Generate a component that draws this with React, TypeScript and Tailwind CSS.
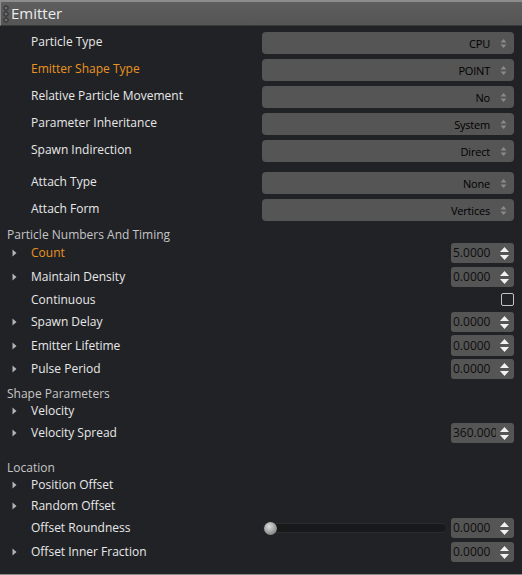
import React from "react";

const Tri = () => (
  <svg width="5" height="8" viewBox="0 0 5 8" className="block">
    <path d="M0.5 0.5 L4.5 4 L0.5 7.5 Z" fill="#b4b4b4" />
  </svg>
);

const ComboArrows = () => (
  <svg width="7" height="11" viewBox="0 0 7 11" className="ml-[10px] block">
    <path d="M0.5 4.5 L3.5 1 L6.5 4.5 Z" fill="#8a8a8a" />
    <path d="M0.5 6.5 L3.5 10 L6.5 6.5 Z" fill="#8a8a8a" />
  </svg>
);

const SpinArrows = () => (
  <svg width="11" height="17" viewBox="0 0 11 17" className="block">
    <path d="M1 7 L5.5 2 L10 7 Z" fill="#f2f2f2" />
    <path d="M1 10 L5.5 15 L10 10 Z" fill="#f2f2f2" />
  </svg>
);

function Combo({ value }: { value: string }) {
  return (
    <div className="flex h-[22px] w-[252px] items-center justify-end rounded-[4px] bg-[#555555] pr-[7px]">
      <span className="text-[11px] leading-none tracking-[-0.2px] text-black">{value}</span>
      <ComboArrows />
    </div>
  );
}

function Spin({ value, h = "h-[20px]" }: { value: string; h?: string }) {
  return (
    <div className={`flex ${h} w-[63px] items-center rounded-[3px] bg-[#555555]`}>
      <span className="w-[45px] overflow-hidden whitespace-nowrap pl-[2px] text-[12px] leading-[16px] text-[#0e0e0e]">
        {value}
      </span>
      <div className="ml-[3px]">
        <SpinArrows />
      </div>
    </div>
  );
}

function Row({
  label,
  orange,
  expand,
  control,
  cls,
  lift,
}: {
  label: string;
  orange?: boolean;
  expand?: boolean;
  control?: React.ReactNode;
  cls: string;
  lift?: boolean;
}) {
  return (
    <div className={`flex items-center ${cls}`}>
      <div className="flex w-[31px] shrink-0 items-center pl-[12px]">{expand ? <Tri /> : null}</div>
      <span
        className={`text-[12px] leading-none whitespace-nowrap ${lift ? "pb-[2px]" : ""} ${
          orange ? "text-[#ea9320]" : "text-[#e8e8e8]"
        }`}
      >
        {label}
      </span>
      <div className="ml-auto flex items-center pr-[8px]">{control}</div>
    </div>
  );
}

function Section({ label, cls }: { label: string; cls: string }) {
  return (
    <div className={`flex ${cls}`}>
      <span className="flex h-[14px] items-center pl-[7px] text-[12px] leading-none text-[#c6c6c6]">
        {label}
      </span>
    </div>
  );
}

export default function App() {
  return (
    <div className="h-[575px] w-[522px] overflow-hidden border-b border-[#8a8a8a] bg-[#212226] font-['Open_Sans',sans-serif]">
      <div className="flex h-[26px] items-center border-t-2 border-l border-[#8c8c8c] bg-gradient-to-b from-[#5e5e5e] to-[#555555] border-b border-b-[#3a3a3a]">
        <svg width="8" height="20" viewBox="0 0 8 20" className="ml-[1px] block">
          <circle cx="4" cy="4" r="2.2" fill="#6a6a6a" stroke="#2a2a2a" strokeWidth="1" />
          <circle cx="4" cy="10" r="2.2" fill="#6a6a6a" stroke="#2a2a2a" strokeWidth="1" />
          <circle cx="4" cy="16" r="2.2" fill="#6a6a6a" stroke="#2a2a2a" strokeWidth="1" />
        </svg>
        <span className="ml-[1px] text-[15px] leading-none text-[#ececec]">Emitter</span>
      </div>

      <div className="pt-[6px]">
        <Row cls="h-[22px] mb-[5px]" lift label="Particle Type" control={<Combo value="CPU" />} />
        <Row cls="h-[22px] mb-[5px]" lift label="Emitter Shape Type" orange control={<Combo value="POINT" />} />
        <Row cls="h-[22px] mb-[5px]" lift label="Relative Particle Movement" control={<Combo value="No" />} />
        <Row cls="h-[22px] mb-[5px]" lift label="Parameter Inheritance" control={<Combo value="System" />} />
        <Row cls="h-[22px] mb-[10px]" lift label="Spawn Indirection" control={<Combo value="Direct" />} />
        <Row cls="h-[22px] mb-[5px]" lift label="Attach Type" control={<Combo value="None" />} />
        <Row cls="h-[22px]" lift label="Attach Form" control={<Combo value="Vertices" />} />

        <Section cls="h-[22px] pt-[7px]" label="Particle Numbers And Timing" />
        <Row cls="h-[20px]" label="Count" orange expand control={<Spin value="5.0000" />} />
        <Row cls="h-[20px] mt-[4px]" label="Maintain Density" expand control={<Spin value="0.0000" />} />
        <Row
          cls="h-[25px]"
          label="Continuous"
          control={<div className="h-[13px] w-[13px] rounded-[2px] border border-[#c4c4c4]" />}
        />
        <Row cls="h-[20px]" label="Spawn Delay" expand control={<Spin value="0.0000" />} />
        <Row cls="h-[21px] mt-[3px]" label="Emitter Lifetime" expand control={<Spin value="0.0000" h="h-[21px]" />} />
        <Row cls="h-[20px] mt-[3px]" label="Pulse Period" expand control={<Spin value="0.0000" />} />

        <Section cls="h-[22px] pt-[8px]" label="Shape Parameters" />
        <Row cls="h-[20px]" label="Velocity" expand />
        <Row cls="h-[20px] mt-[2px]" label="Velocity Spread" expand control={<Spin value="360.0000" />} />

        <Section cls="h-[32px] pt-[18px]" label="Location" />
        <Row cls="h-[20px]" label="Position Offset" expand />
        <Row cls="h-[20px] mt-[1px]" label="Random Offset" expand />
        <div className="mt-[2px] flex h-[20px] items-center">
          <div className="w-[31px] shrink-0" />
          <span className="text-[12px] leading-none text-[#e8e8e8]">Offset Roundness</span>
          <div className="ml-auto flex items-center pr-[8px]">
            <div className="relative mr-[4px] flex h-[10px] w-[184px] items-center rounded-full border border-[#2c2c2c] bg-[#18191b]">
              <div className="absolute left-[0px] top-[-2px] h-[13px] w-[13px] rounded-full bg-[radial-gradient(circle_at_40%_35%,#dcdcdc,#8a8a8a_70%,#6a6a6a)]" />
            </div>
            <Spin value="0.0000" />
          </div>
        </div>
        <Row cls="h-[20px] mt-[4px]" label="Offset Inner Fraction" expand control={<Spin value="0.0000" />} />
      </div>
    </div>
  );
}
